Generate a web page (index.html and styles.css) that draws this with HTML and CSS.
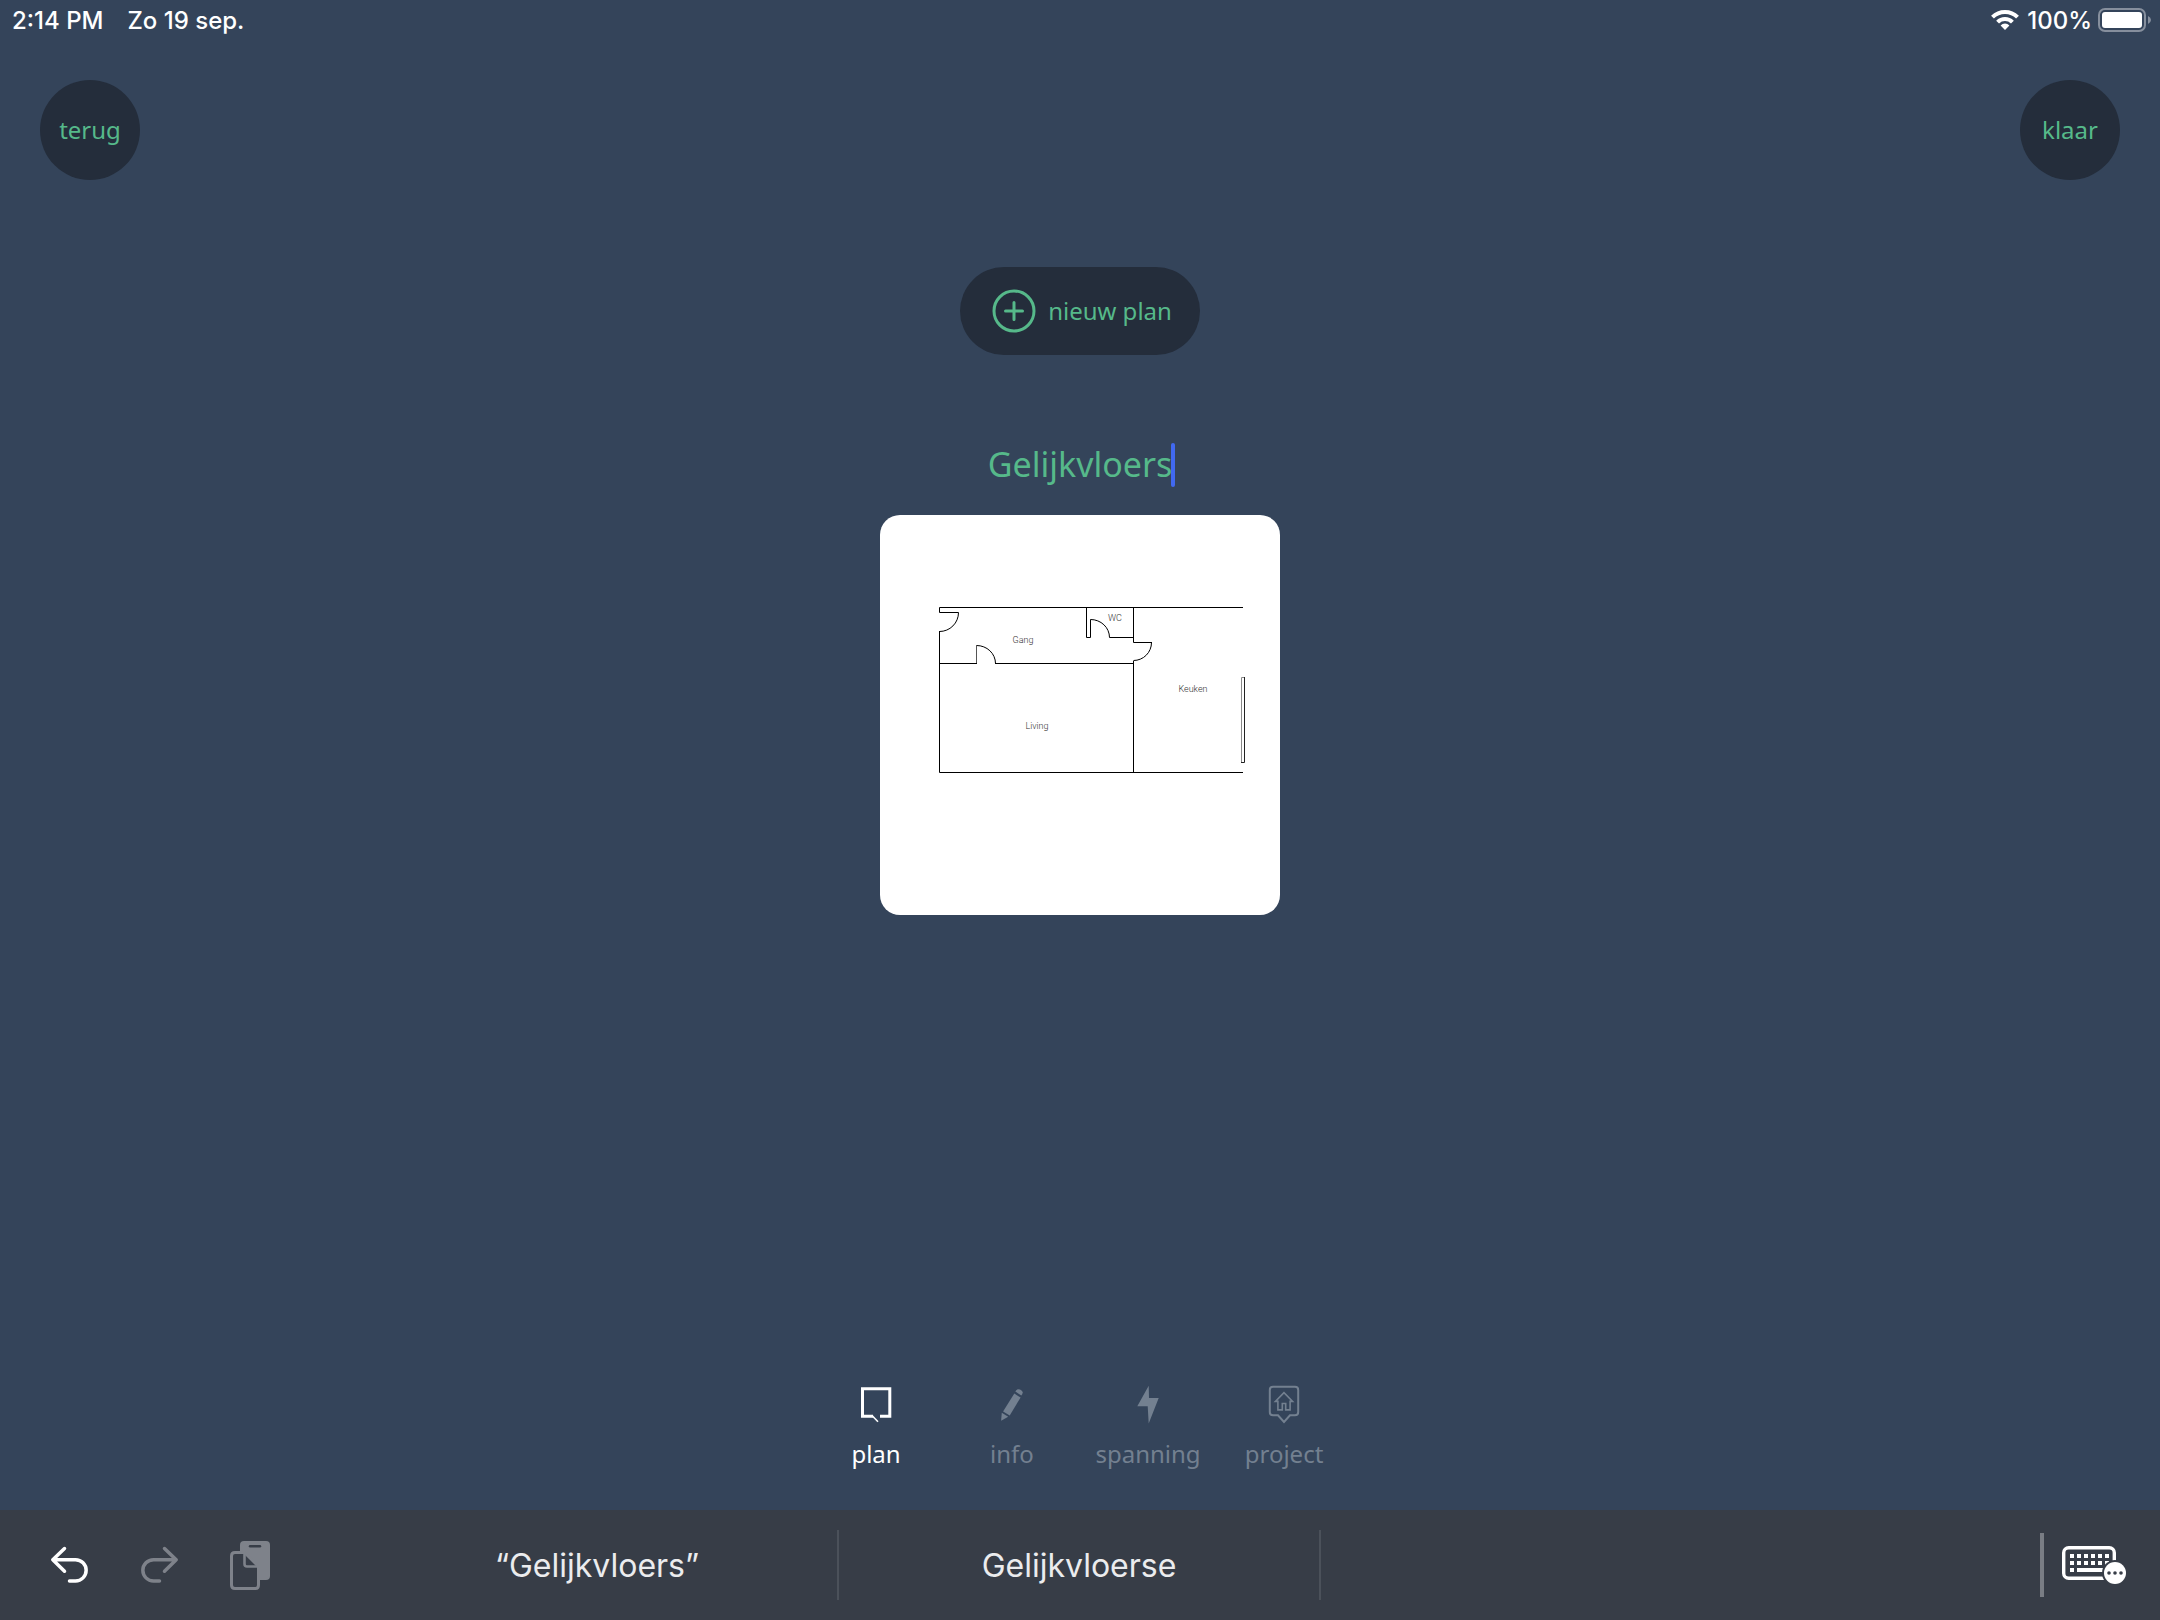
FILE: index.html
```html
<!DOCTYPE html>
<html lang="nl">
<head>
    <meta charset="UTF-8">
    <meta name="viewport" content="width=device-width, initial-scale=1.0">
    <title>Plan</title>
    <link rel="stylesheet" href="styles.css">
</head>
<body>
    <div class="status-bar">
        <div class="status-left">
            <span>2:14 PM</span>
            <span>Zo 19 sep.</span>
        </div>
        <div class="status-right">
            <svg class="wifi" width="28" height="22" viewBox="0 0 28 22">
                <g fill="none" stroke="#fff" stroke-width="4">
                    <path d="M1.5 8.2a17.6 17.6 0 0 1 25 0"/>
                    <path d="M6.6 13.2a10.4 10.4 0 0 1 14.8 0"/>
                </g>
                <path d="M9.6 16.4a6.2 6.2 0 0 1 8.8 0L14 21z" fill="#fff"/>
            </svg>
            <span>100%</span>
            <svg width="54" height="24" viewBox="0 0 54 24">
                <rect x="1" y="1" width="46" height="22" rx="6" fill="none" stroke="#868f9d" stroke-width="2"/>
                <rect x="4" y="4" width="40" height="16" rx="3" fill="#fff"/>
                <path d="M50 8q3 1.5 3 4t-3 4z" fill="#868f9d"/>
            </svg>
        </div>
    </div>

    <header class="top-bar">
        <button class="round-button">terug</button>
        <button class="round-button">klaar</button>
    </header>

    <main>
        <button class="new-plan">
            <svg width="44" height="44" viewBox="0 0 44 44" fill="none" stroke="#56b98a" stroke-width="3" stroke-linecap="round">
                <circle cx="22" cy="22" r="20"/>
                <path d="M22 13.5v17M13.5 22h17"/>
            </svg>
            <span class="label">nieuw plan</span>
        </button>

        <div class="plan-name">
            <input class="name-input" type="text" value="Gelijkvloers" size="10" aria-label="Naam van het plan">
            <span class="caret"></span>
        </div>

        <div class="plan-card">
            <svg viewBox="0 0 400 400" fill="none" stroke="#000">
                <!-- walls -->
                <path d="M363 92.5H59.5V97.5H78.5M59.5 116V257.5H363"/>
                <path d="M206.5 92.5V122.5H210.5V104.5M229.5 122.5H253.5"/>
                <path d="M253.5 92.5V127.5H272M253.5 146V257.5"/>
                <path d="M59.5 148.5H97M115 148.5H253.5"/>
                <!-- doors -->
                <path d="M78.5 97.5A19 19 0 0 1 59.5 116.5"/>
                <path d="M210.5 104.5A19 18 0 0 1 229.5 122.5"/>
                <path d="M271.5 127.5A18 18 0 0 1 253.5 145.5"/>
                <path d="M96.5 130.5A19 18 0 0 1 115.5 148.5"/>
                <path d="M96.5 130V148" stroke="#555"/>
                <!-- window -->
                <path d="M364 162.5H361.5V247" stroke="#888"/>
                <path d="M364.5 162V247.5H361" stroke="#222"/>
                <g class="rooms">
                    <text x="143" y="128">Gang</text>
                    <text x="235" y="106">WC</text>
                    <text x="157" y="214">Living</text>
                    <text x="313" y="177">Keuken</text>
                </g>
            </svg>
        </div>
    </main>

    <nav class="tabs">
        <button class="tab active">
            <svg width="40" height="40" viewBox="0 0 40 40" fill="none" stroke="currentColor">
                <path d="M24 31.2H33.8V3.8H6.5V31.2H17" stroke-width="3"/>
                <path d="M16 30.5L22 36.8" stroke-width="1.6"/>
            </svg>
            plan
        </button>
        <button class="tab">
            <svg width="40" height="40" viewBox="0 0 40 40" fill="currentColor">
                <path d="M23.3 6.5Q25 3.2 28 4.6L29.5 5.5Q32 7.3 29.3 10.6Z"/>
                <path d="M22.3 8.6L28.6 12.5L17.7 30.4L11.1 26.5Z"/>
                <path d="M9.8 27.8L16.2 31.7L9.1 35.8Z"/>
            </svg>
            info
        </button>
        <button class="tab">
            <svg width="40" height="40" viewBox="0 0 40 40" fill="currentColor">
                <path d="M20.7.7L9.3 21.3H19.7L20.7 38.5L30.7 13H21Z"/>
            </svg>
            spanning
        </button>
        <button class="tab">
            <svg width="40" height="40" viewBox="0 0 40 40" fill="none" stroke="currentColor" stroke-width="2">
                <path d="M9 1.8H31Q34.2 1.8 34.2 5V27Q34.2 30.3 31 30.3H26L20 37L14 30.3H9Q5.8 30.3 5.8 27V5Q5.8 1.8 9 1.8Z"/>
                <path d="M20 7.6L11.4 16.4H13.9V24.9H18.3V18.5H21.7V24.9H26.1V16.4H28.6Z" stroke-width="1.6"/>
            </svg>
            project
        </button>
    </nav>

    <footer class="keyboard-bar">
        <div class="edit-actions">
            <button class="icon-button" aria-label="Herstel">
                <svg width="40" height="40" viewBox="0 0 40 40" fill="none" stroke="#fff" stroke-width="3.5" stroke-linecap="round" stroke-linejoin="round">
                    <path d="M14.5 3.5L2.8 14.7L14.5 26.2M2.8 14.7H25.5A10.6 10.6 0 0 1 25.5 36H19.5"/>
                </svg>
            </button>
            <button class="icon-button" aria-label="Opnieuw">
                <svg width="40" height="40" viewBox="0 0 40 40" fill="none" stroke="#7e828a" stroke-width="3.5" stroke-linecap="round" stroke-linejoin="round">
                    <path d="M24.5 3.5L36.2 14.7L24.5 26.2M36.2 14.7H13.5A10.6 10.6 0 0 0 13.5 36H19.5"/>
                </svg>
            </button>
            <button class="icon-button" aria-label="Plak">
                <svg width="40" height="50" viewBox="0 0 40 50">
                    <!-- clipboard behind, folded sheet in front -->
                    <rect x="10" y="1" width="30" height="39" rx="4" fill="#7e828a"/>
                    <path d="M20 6.2H30" stroke="#373d47" stroke-width="2.4" stroke-linecap="round"/>
                    <path d="M5 12.5H14.5L28.5 26.5V45Q28.5 48.5 25.5 48.5H5Q1.5 48.5 1.5 45V16Q1.5 12.5 5 12.5Z" fill="#373d47" stroke="#7e828a" stroke-width="3"/>
                    <path d="M14.5 12.5V24Q14.5 26.5 17 26.5H28.5" fill="none" stroke="#7e828a" stroke-width="2.6"/>
                </svg>
            </button>
        </div>
        <button class="suggestion">“Gelijkvloers”</button>
        <button class="suggestion">Gelijkvloerse</button>
        <div class="suggestion-empty"></div>
        <div class="keyboard-toggle">
            <span class="handle"></span>
            <button class="icon-button" aria-label="Toetsenbord">
                <svg width="64" height="38" viewBox="0 0 64 38">
                    <rect x="1.7" y="1.7" width="50.6" height="30.6" rx="5" fill="none" stroke="#fff" stroke-width="3.4"/>
                    <path d="M8 10H47M8 17H47" stroke="#fff" stroke-width="4" stroke-dasharray="4 3"/>
                    <path d="M8 24H12M15 24H42" stroke="#fff" stroke-width="4"/>
                    <circle cx="53" cy="27" r="13" fill="#373d47"/>
                    <circle cx="53" cy="27" r="11" fill="#fff"/>
                    <g fill="#373d47">
                        <circle cx="47" cy="27" r="1.8"/>
                        <circle cx="53" cy="27" r="1.8"/>
                        <circle cx="59" cy="27" r="1.8"/>
                    </g>
                </svg>
            </button>
        </div>
    </footer>
</body>
</html>
```
FILE: styles.css
```css
* {
    box-sizing: border-box;
}
body {
    margin: 0;
    min-height: 100vh;
    display: flex;
    flex-direction: column;
    background-color: #34445a;
    color: white;
    font-family: "Noto Sans", sans-serif;
    font-size: 24px;
}
button {
    padding: 0;
    border: none;
    background: none;
    color: inherit;
    font: inherit;
    cursor: pointer;
}
svg {
    display: block;
}
.status-bar {
    display: flex;
    justify-content: space-between;
    height: 40px;
    padding: 0 8px 0 12px;
    font-family: Inter, sans-serif;
    font-weight: 500;
    font-size: 24px;
}
.status-left {
    display: flex;
    align-items: center;
    gap: 24px;
}
.status-right {
    display: flex;
    align-items: center;
    gap: 6px;
}
.wifi {
    margin-right: 2px;
}
.top-bar {
    display: flex;
    justify-content: space-between;
    padding: 40px 40px 0;
}
.round-button {
    width: 100px;
    height: 100px;
    padding-bottom: 2px;
    border-radius: 50%;
    background-color: #242d3b;
    color: #56b98a;
}
main {
    flex: 1;
    display: flex;
    flex-direction: column;
    align-items: center;
    padding-top: 87px;
}
.new-plan {
    display: flex;
    justify-content: center;
    align-items: center;
    gap: 12px;
    width: 240px;
    height: 88px;
    padding-left: 4px;
    border-radius: 44px;
    background-color: #242d3b;
    color: #56b98a;
}
.label {
    padding-bottom: 2px;
}
.plan-name {
    position: relative;
    margin: 88px 0 28px;
}
.name-input {
    display: block;
    field-sizing: content;
    height: 44px;
    padding: 0 0 2px;
    border: none;
    outline: none;
    background: none;
    color: #56b98a;
    font: inherit;
    font-size: 34px;
    text-align: center;
}
.caret {
    position: absolute;
    left: 100%;
    top: 0;
    width: 4px;
    height: 44px;
    margin-left: -1px;
    border-radius: 2px;
    background-color: #4169f0;
}
.plan-card {
    width: 400px;
    border-radius: 20px;
    background-color: white;
}
.rooms {
    fill: #333;
    stroke: none;
    font-family: Roboto, sans-serif;
    font-weight: 300;
    font-size: 9px;
    text-anchor: middle;
}
.tabs {
    display: flex;
    justify-content: center;
    padding-bottom: 40px;
}
.tab {
    display: flex;
    flex-direction: column;
    align-items: center;
    gap: 12px;
    width: 136px;
    line-height: 33px;
    color: #738090;
}
.tab.active {
    color: white;
}
.keyboard-bar {
    display: grid;
    grid-template-columns: 1fr repeat(3, 482px) 1fr;
    align-items: center;
    height: 110px;
    background-color: #373d47;
}
.edit-actions {
    display: flex;
    align-items: center;
    gap: 50px;
    padding-left: 50px;
}
.suggestion {
    height: 70px;
    border-right: 2px solid #4b515a;
    color: #ebecee;
    font-family: Inter, sans-serif;
    font-size: 32px;
}
.keyboard-toggle {
    display: flex;
    justify-content: flex-end;
    align-items: center;
    gap: 18px;
    padding-right: 34px;
}
.handle {
    width: 4px;
    height: 64px;
    background-color: #797d84;
}
```
